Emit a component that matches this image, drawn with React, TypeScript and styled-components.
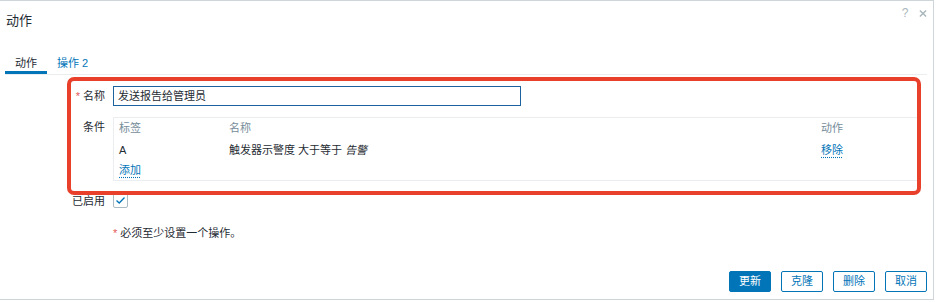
import React from "react";
import styled, { createGlobalStyle } from "styled-components";

const GlobalStyle = createGlobalStyle`
  html, body {
    margin: 0;
    padding: 0;
    background: #ffffff;
  }
  body {
    font-family: "Liberation Sans", Arial, "Noto Sans CJK SC", sans-serif;
    font-size: 11px;
    color: #1f2c33;
  }
`;

const Dialog = styled.div`
  box-sizing: border-box;
  width: 935px;
  height: 300px;
  margin-left: -1px;
  border: 1px solid #cfd6da;
  background: #ffffff;
  display: flex;
  flex-direction: column;
  overflow: hidden;
`;

const Header = styled.div`
  display: flex;
  justify-content: space-between;
  align-items: flex-start;
  height: 49px;
  padding: 0 6px;
`;

const Title = styled.h4`
  margin: 10px 0 0;
  font-size: 13px;
  font-weight: normal;
  line-height: 20px;
  color: #1f2c33;
`;

const HeaderIcons = styled.div`
  display: flex;
  gap: 10px;
  margin-top: 4px;
  color: #a9b6bc;
  font-size: 12px;
  line-height: 16px;
`;

const IconButton = styled.span`
  display: inline-flex;
  align-items: center;
  justify-content: center;
  width: 8px;
  height: 16px;
`;

const TabList = styled.div`
  display: flex;
  margin: 0 6px 0 5px;
  border-bottom: 1px solid #ebeef0;
`;

const Tab = styled.div<{ $active?: boolean }>`
  padding: 5px 10px 0;
  line-height: 16px;
  border-bottom: 3px solid ${(p) => (p.$active ? "#0275b8" : "transparent")};
  color: ${(p) => (p.$active ? "#1f2c33" : "#0275b8")};
`;

const Count = styled.span`
  margin-left: 3px;
  font-size: 11px;
`;

const Form = styled.div`
  position: relative;
  display: grid;
  grid-template-columns: 100px 807px;
  column-gap: 8px;
  padding: 11px 0 0 5px;
  align-items: start;
`;

const Annotation = styled.div`
  position: absolute;
  left: 67px;
  top: 2px;
  width: 854px;
  height: 118px;
  box-sizing: border-box;
  border: 4px solid #e8402b;
  border-radius: 7px;
  pointer-events: none;
`;

const Label = styled.label<{ $mt?: number }>`
  text-align: right;
  line-height: 20px;
  margin-top: ${(p) => p.$mt ?? 0}px;
`;

const Required = styled.span`
  color: #e45959;
  margin-right: 3px;
`;

const Field = styled.div<{ $mt?: number }>`
  margin-top: ${(p) => p.$mt ?? 0}px;
`;

const TextInput = styled.div`
  box-sizing: border-box;
  width: 408px;
  height: 20px;
  border: 1px solid #1b629f;
  padding: 0 4px;
  line-height: 18px;
  font-size: 11px;
`;

const Table = styled.div`
  box-sizing: border-box;
  border: 1px solid #ebeef0;
  padding: 0 5px 1px;
`;

const TableRow = styled.div<{ $head?: boolean }>`
  display: grid;
  grid-template-columns: 110px 1fr 93px;
  height: ${(p) => (p.$head ? 21 : 20)}px;
  line-height: ${(p) => (p.$head ? 21 : 22)}px;
  color: ${(p) => (p.$head ? "#768d99" : "#1f2c33")};
`;

const Link = styled.span`
  color: #0275b8;
  text-decoration: underline dotted #0275b8;
  text-underline-offset: 3px;
  justify-self: start;
`;

const Em = styled.em`
  font-style: italic;
`;

const Checkbox = styled.span`
  box-sizing: border-box;
  display: flex;
  align-items: center;
  justify-content: center;
  width: 15px;
  height: 15px;
  margin-top: 2px;
  border: 1px solid #acbbc2;
  border-radius: 2px;
`;

const Note = styled.div`
  grid-column: 2;
  margin-top: 14px;
  line-height: 16px;
`;

const Footer = styled.div`
  margin-top: auto;
  display: flex;
  justify-content: flex-end;
  gap: 10px;
  padding: 0 6px 7px 0;
`;

const Button = styled.button<{ $primary?: boolean }>`
  box-sizing: border-box;
  height: 21px;
  min-width: 42px;
  padding: 0 9px;
  border: 1px solid #0275b8;
  border-radius: 2px;
  background: ${(p) => (p.$primary ? "#0275b8" : "#ffffff")};
  color: ${(p) => (p.$primary ? "#ffffff" : "#0275b8")};
  font-family: inherit;
  font-size: 11px;
  line-height: 19px;
  cursor: pointer;
`;

const App = () => {
  return (
    <>
      <GlobalStyle />
      <Dialog>
        <Header>
          <Title>动作</Title>
          <HeaderIcons>
            <IconButton>?</IconButton>
            <IconButton>
              <svg width="9" height="9" viewBox="0 0 9 9">
                <path d="M1 1 L8 8 M8 1 L1 8" stroke="#a9b6bc" strokeWidth="1.6" />
              </svg>
            </IconButton>
          </HeaderIcons>
        </Header>
        <TabList>
          <Tab $active>动作</Tab>
          <Tab>
            操作<Count>2</Count>
          </Tab>
        </TabList>
        <Form>
          <Label>
            <Required>*</Required>名称
          </Label>
          <Field>
            <TextInput>发送报告给管理员</TextInput>
          </Field>

          <Label $mt={11}>条件</Label>
          <Field $mt={11}>
            <Table>
              <TableRow $head>
                <span>标签</span>
                <span>名称</span>
                <span>动作</span>
              </TableRow>
              <TableRow>
                <span>A</span>
                <span>
                  触发器示警度 大于等于 <Em>告警</Em>
                </span>
                <Link>移除</Link>
              </TableRow>
              <TableRow>
                <Link>添加</Link>
              </TableRow>
            </Table>
          </Field>

          <Label $mt={10}>已启用</Label>
          <Field $mt={10}>
            <Checkbox>
              <svg width="11" height="9" viewBox="0 0 11 9">
                <path d="M1.5 4.5 L4.2 7 L9.5 1.5" fill="none" stroke="#0275b8" strokeWidth="1.3" />
              </svg>
            </Checkbox>
          </Field>

          <Note>
            <Required>*</Required>必须至少设置一个操作。
          </Note>
          <Annotation />
        </Form>
        <Footer>
          <Button $primary>更新</Button>
          <Button>克隆</Button>
          <Button>删除</Button>
          <Button>取消</Button>
        </Footer>
      </Dialog>
    </>
  );
};

export default App;
